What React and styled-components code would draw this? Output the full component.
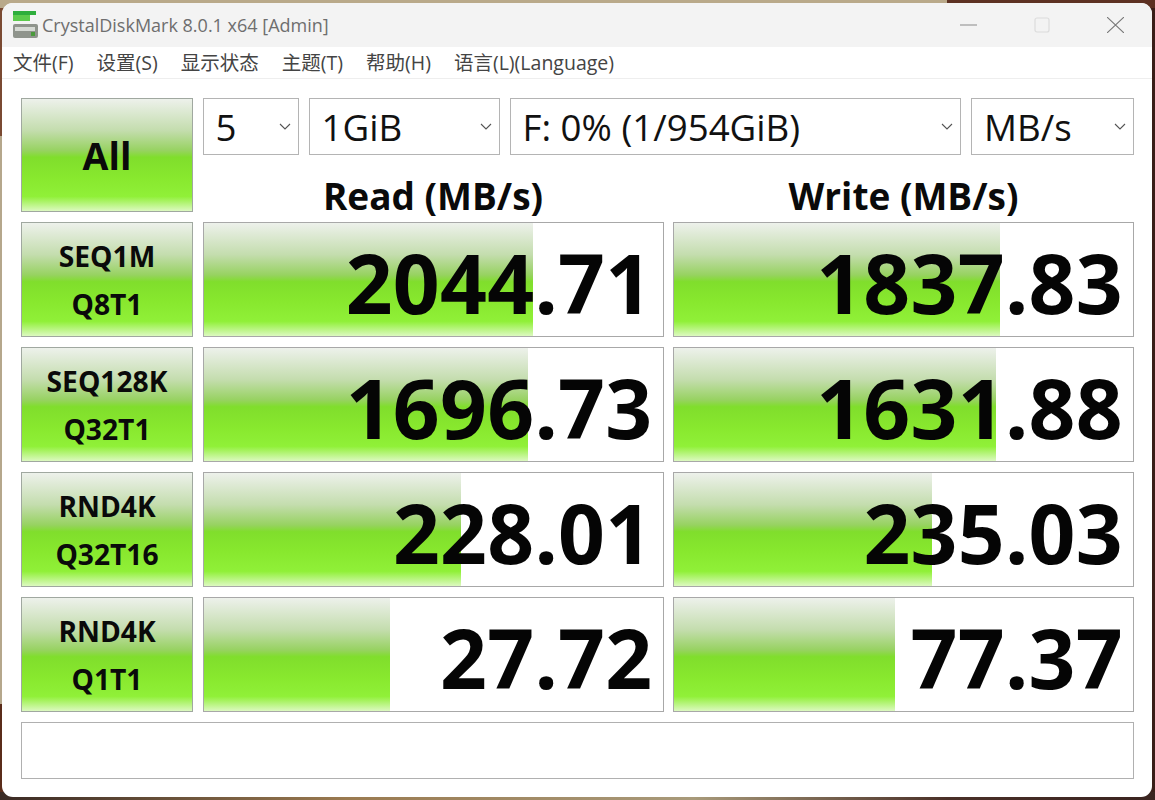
import React from "react"
import styled, { createGlobalStyle, css } from "styled-components"

const GlobalStyle = createGlobalStyle`
  html, body { margin: 0; padding: 0; }
  body { font-family: "Open Sans", "Noto Sans CJK SC", sans-serif; }
`

const greenFill = css`
  background: linear-gradient(180deg, #edf1eb 0%, #c4ddae 28%, #97d261 46%, #80de2c 52%, #88e82e 70%, #90f038 87%, #dcf9c0 100%);
`

const Desktop = styled.div`
  width: 1155px;
  height: 800px;
  box-sizing: border-box;
  padding: 3px 3px 3px 2px;
  background:
    linear-gradient(90deg, #b9a98a 0%, #b9a98a 82%, #5d3122 82%, #5d3122 100%) top / 100% 8px no-repeat,
    linear-gradient(90deg, #3a2a24 0%, #9a7a50 30%, #a89a7a 60%, #4a3028 82%, #3a2420 100%) bottom / 100% 8px no-repeat,
    linear-gradient(180deg, #7a4a32 0%, #7a4a32 17%, #b5a78c 17%, #b5a78c 88%, #5a2c1a 88%, #5a2c1a 100%) left / 8px 100% no-repeat,
    #3a1e18;
  overflow: hidden;
`
const Window = styled.div`
  height: 794px;
  border-radius: 11px;
  background: #fff;
  overflow: hidden;
  display: flex;
  flex-direction: column;
`
const TitleBar = styled.div`
  height: 44px;
  flex: none;
  background: #f3f3f3;
  display: flex;
  align-items: center;
  padding-left: 10px;
`
const Title = styled.div`
  margin-left: 2px;
  font-size: 18px;
  color: #6e6e6e;
  white-space: nowrap;
`
const WinButtons = styled.div`
  margin-left: auto;
  display: flex;
  align-items: center;
  gap: 57px;
  padding-right: 28px;
`
const MenuBar = styled.div`
  height: 32px;
  flex: none;
  box-sizing: border-box;
  border-bottom: 1px solid #eeeeee;
  display: flex;
  align-items: center;
  gap: 23px;
  padding: 0 0 2px 11px;
`
const MenuItem = styled.span`
  font-size: 19.5px;
  color: #444;
  white-space: nowrap;
`
const Board = styled.div`
  padding: 19px 0 0 19px;
  display: grid;
  grid-template-columns: 172px 461px 461px;
  grid-template-rows: 57px 47px repeat(4, 115px) 57px;
  gap: 10px 9.5px;
`
const AllButton = styled.div`
  grid-row: 1 / span 2;
  box-sizing: border-box;
  border: 1px solid #a0a8a0;
  display: flex;
  align-items: center;
  justify-content: center;
  font-size: 37.5px;
  font-weight: 700;
  color: #0a0a0a;
  ${greenFill}
`
const Controls = styled.div`
  grid-column: 2 / span 2;
  display: flex;
  gap: 10px;
`
const Select = styled.div`
  width: ${p => p.$w}px;
  height: 57px;
  flex: none;
  box-sizing: border-box;
  border: 1px solid #b4b4b4;
  display: flex;
  align-items: center;
  justify-content: space-between;
  padding: 0 7px 0 12px;
  font-size: 36.7px;
  color: #111;
  white-space: nowrap;
`
const Head = styled.div`
  display: flex;
  align-items: center;
  justify-content: center;
  font-size: 37px;
  font-weight: 700;
  color: #0a0a0a;
  padding-top: 13px;
  box-sizing: border-box;
  height: 47px;
`
const Row = styled.div`
  display: contents;
`
const TestButton = styled.div`
  box-sizing: border-box;
  border: 1px solid #a0a8a0;
  display: flex;
  flex-direction: column;
  align-items: center;
  justify-content: center;
  gap: 6px;
  font-size: 28.2px;
  line-height: 42px;
  font-weight: 700;
  color: #0a0a0a;
  ${greenFill}
`
const Score = styled.div`
  position: relative;
  box-sizing: border-box;
  border: 1px solid #a8a8a8;
  background: #fff;
  display: flex;
  align-items: center;
  justify-content: flex-end;
  padding: 4px 10px 0 0;
  overflow: hidden;
`
const Bar = styled.div`
  position: absolute;
  left: 0;
  top: 0;
  bottom: 0;
  ${greenFill}
`
const Value = styled.span`
  position: relative;
  font-size: 82px;
  font-weight: 700;
  line-height: 1;
  letter-spacing: 0.3px;
  color: #050505;
`
const Comment = styled.div`
  grid-column: 1 / span 3;
  box-sizing: border-box;
  border: 1px solid #b0b0b0;
`

const rows = [
  { a: "SEQ1M", b: "Q8T1", r: "2044.71", rw: 329, w: "1837.83", ww: 326 },
  { a: "SEQ128K", b: "Q32T1", r: "1696.73", rw: 324, w: "1631.88", ww: 322 },
  { a: "RND4K", b: "Q32T16", r: "228.01", rw: 257, w: "235.03", ww: 258 },
  { a: "RND4K", b: "Q1T1", r: "27.72", rw: 186, w: "77.37", ww: 221 },
]
const menus = ["文件(F)", "设置(S)", "显示状态", "主题(T)", "帮助(H)", "语言(L)(Language)"]

const AppIcon = () => (
  <svg width="28" height="28" viewBox="0 0 28 28">
    <rect x="1" y="0" width="23" height="4" fill="#2eae3c" />
    <rect x="1" y="4" width="17" height="6" fill="#5ccb4c" />
    <rect x="1" y="13" width="25" height="14" rx="2" fill="#8f948c" />
    <rect x="3" y="16" width="20" height="4" fill="#d6dad4" />
    <rect x="19" y="21" width="4" height="4" fill="#4a9a3c" />
  </svg>
)

const Chevron = () => (
  <svg width="12" height="7" viewBox="0 0 12 7" fill="none" stroke="#555" strokeWidth="1.1">
    <path d="M1 1 L6 6 L11 1" />
  </svg>
)

export default function App() {
  return (
    <Desktop>
      <GlobalStyle />
      <Window>
        <TitleBar>
          <AppIcon />
          <Title>CrystalDiskMark 8.0.1 x64 [Admin]</Title>
          <WinButtons>
            <svg width="17" height="16" viewBox="0 0 17 16" stroke="#8a8a8a" strokeWidth="1.2"><path d="M0 8 H17" /></svg>
            <svg width="16" height="16" viewBox="0 0 16 16" fill="none" stroke="#dcdcdc" strokeWidth="1.2"><rect x="1" y="1" width="14" height="14" rx="2" /></svg>
            <svg width="17" height="16" viewBox="0 0 17 16" stroke="#777" strokeWidth="1.1"><path d="M0 0 L17 16 M17 0 L0 16" /></svg>
          </WinButtons>
        </TitleBar>
        <MenuBar>
          {menus.map(m => <MenuItem key={m}>{m}</MenuItem>)}
        </MenuBar>
        <Board>
          <AllButton>All</AllButton>
          <Controls>
            <Select $w={96}>5<Chevron /></Select>
            <Select $w={191}>1GiB<Chevron /></Select>
            <Select $w={451.5}>F: 0% (1/954GiB)<Chevron /></Select>
            <Select $w={162.5}>MB/s<Chevron /></Select>
          </Controls>
          <Head>Read (MB/s)</Head>
          <Head>Write (MB/s)</Head>
          {rows.map(row => (
            <Row key={row.b}>
              <TestButton><span>{row.a}</span><span>{row.b}</span></TestButton>
              <Score><Bar style={{ width: row.rw }} /><Value>{row.r}</Value></Score>
              <Score><Bar style={{ width: row.ww }} /><Value>{row.w}</Value></Score>
            </Row>
          ))}
          <Comment />
        </Board>
      </Window>
    </Desktop>
  )
}
